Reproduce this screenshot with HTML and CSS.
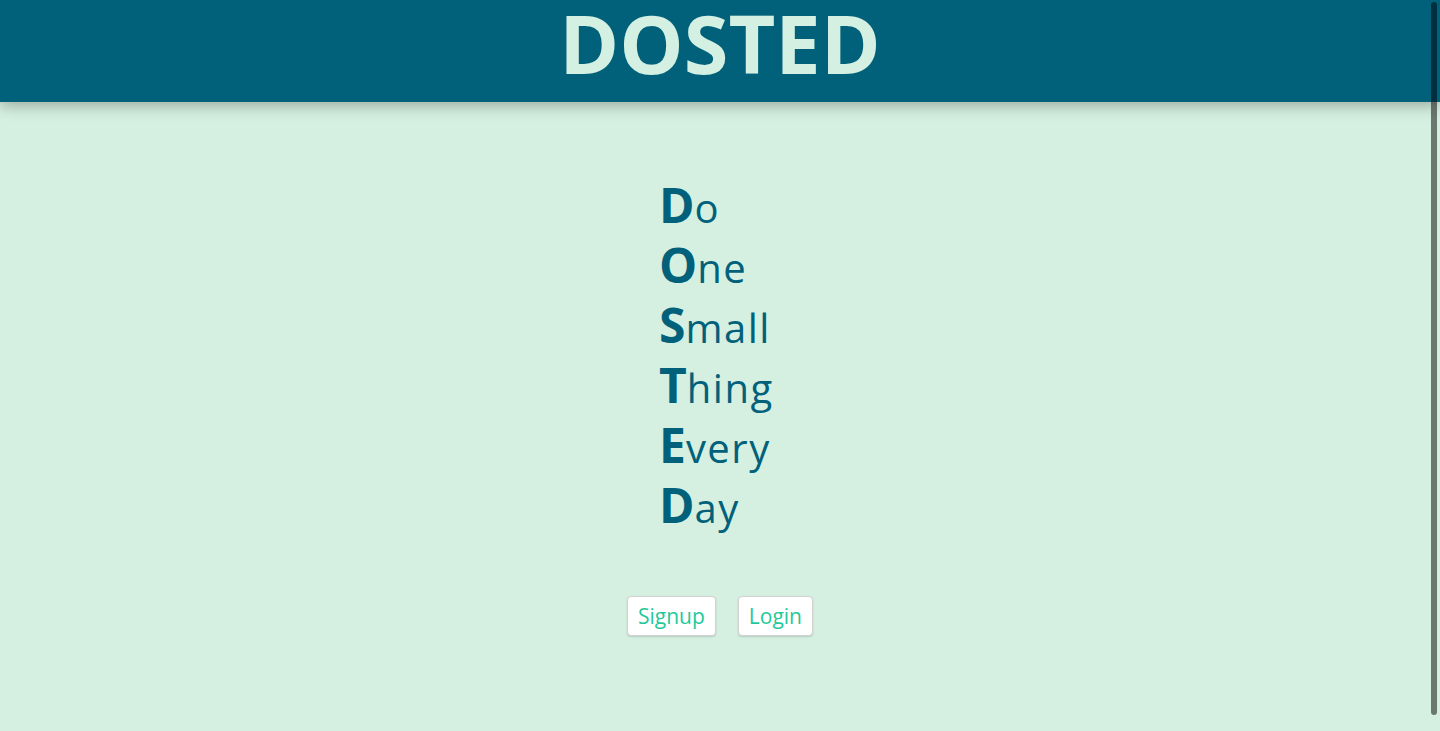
FILE: index.html
```html
<!DOCTYPE html>
<html lang="en">
<head>
<meta charset="utf-8">
<title>DOSTED</title>
<link rel="stylesheet" href="styles.css">
</head>
<body>
<header class="topbar">
  <h1 class="brand">DOSTED</h1>
</header>
<main class="hero">
  <ul class="acronym">
    <li><b>D</b>o</li>
    <li><b>O</b>ne</li>
    <li><b>S</b>mall</li>
    <li><b>T</b>hing</li>
    <li><b>E</b>very</li>
    <li><b>D</b>ay</li>
  </ul>
  <div class="actions">
    <button class="btn">Signup</button>
    <button class="btn">Login</button>
  </div>
</main>
<div class="scroll-thumb"></div>
</body>
</html>
```

FILE: styles.css
```css
* { box-sizing: border-box; }
html, body {
  margin: 0;
  padding: 0;
  height: 100%;
  overflow: hidden;
}
body {
  background: #d5f0e1;
  font-family: "Open Sans", "DejaVu Sans", sans-serif;
  color: #02617a;
}
.topbar {
  height: 102px;
  background: #01617a;
  display: flex;
  justify-content: center;
  align-items: flex-start;
  box-shadow: 0 4px 14px rgba(0, 0, 0, 0.28);
  position: relative;
  z-index: 1;
}
.brand {
  margin: 0;
  font-size: 81px;
  line-height: 85px;
  font-weight: 700;
  color: #d4f0e2;
  letter-spacing: 0;
}
.hero {
  display: flex;
  flex-direction: column;
  align-items: center;
  padding-top: 76px;
}
.acronym {
  list-style: none;
  margin: 0;
  padding: 0;
  width: 122px;
}
.acronym li {
  line-height: 60px;
  height: 60px;
  font-size: 40px;
  font-weight: 400;
  letter-spacing: 1.5px;
  white-space: nowrap;
}
.acronym b {
  font-size: 48px;
  line-height: 1;
  font-weight: 700;
  letter-spacing: 0;
}
.actions {
  display: flex;
  gap: 22px;
  margin-top: 58px;
}
.btn {
  height: 40px;
  padding: 0 10px;
  background: #ffffff;
  border: 1px solid #d2d2d2;
  border-radius: 4px;
  box-shadow: 0 1px 2px rgba(0, 0, 0, 0.15);
  font-family: "Open Sans", "DejaVu Sans", sans-serif;
  font-size: 21px;
  color: #1fc99a;
  cursor: pointer;
}
.scroll-thumb {
  position: fixed;
  top: 2px;
  right: 3px;
  width: 6px;
  height: 713px;
  border-radius: 3px;
  background: rgba(0, 0, 0, 0.5);
  z-index: 2;
}
```
